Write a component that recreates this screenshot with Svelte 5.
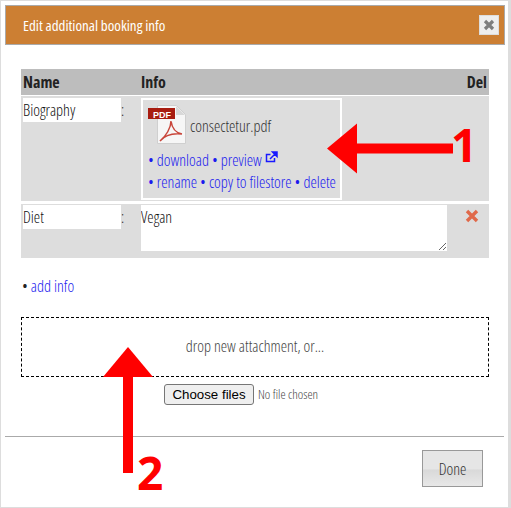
<script>
  let rows = [{ name: 'Diet', value: 'Vegan' }];
</script>

<div class="dialog">
  <header class="title-bar">
    <span>Edit additional booking info</span>
    <button class="close" aria-label="close">
      <svg width="12" height="12" viewBox="0 0 12 12"><path d="M2 2l8 8M10 2l-8 8" stroke="#7d7d7d" stroke-width="3.2" /></svg>
    </button>
  </header>

  <div class="content">
    <div class="thead">
      <span>Name</span>
      <span>Info</span>
      <span class="del">Del</span>
    </div>

    <div class="row first">
      <div class="name">Biography</div>
      <span class="colon">:</span>
      <div class="file-box">
        <div class="file-head">
          <svg class="pdf" width="38" height="40" viewBox="0 0 38 40">
            <path d="M9.5 .5h19l9 9v29h-28z" fill="#f6f6f6" stroke="#cfcfcf" />
            <path d="M28 1v9h9z" fill="#d8d8d8" />
            <rect x="0" y="3" width="27" height="11" fill="#a81c10" />
            <text x="5" y="12.5" class="pdf-label">PDF</text>
            <path d="M23 16c0 7-5 15-11 20 5-6 13-8 22-7-6-1-10-6-11-13z" fill="none" stroke="#c8453a" stroke-width="1.5" />
          </svg>
          <span class="filename">consectetur.pdf</span>
        </div>
        <div class="links">• <a href="#a">download</a> • <a href="#a">preview</a>
          <svg class="ext" width="13" height="12" viewBox="0 0 13 12"><path d="M9.5 7v3.5h-8v-7h4" fill="none" stroke="#1a1aff" stroke-width="1.5" /><path d="M5 8l5-5M7.5 1H12v4.5z" stroke="#1a1aff" stroke-width="1.5" fill="#1a1aff" /></svg>
        </div>
        <div class="links">• <a href="#a">rename</a> • <a href="#a">copy to filestore</a> • <a href="#a">delete</a></div>
      </div>
    </div>

    {#each rows as row}
      <div class="row second">
        <div class="name">{row.name}</div>
        <span class="colon">:</span>
        <textarea value={row.value}></textarea>
        <svg class="remove" width="14" height="14" viewBox="0 0 14 14"><path d="M2 2l10 10M12 2L2 12" stroke="#e0694a" stroke-width="3.4" /></svg>
      </div>
    {/each}

    <p class="add">• <a href="#a">add info</a></p>

    <div class="drop">drop new attachment, or...</div>

    <div class="chooser">
      <button class="choose">Choose files</button>
      <span>No file chosen</span>
    </div>
  </div>

  <footer>
    <button class="done">Done</button>
  </footer>

  <!-- annotations drawn on top of the screenshot -->
  <svg class="arrow" width="511" height="508" viewBox="0 0 511 508">
    <path d="M327 148.500l30-25v50z" fill="#f00" />
    <path d="M355 143.500h98v10h-98z" fill="#f00" />
    <path d="M128 347l-25 30h50z" fill="#f00" />
    <path d="M123 375h10v98h-10z" fill="#f00" />
  </svg>
  <span class="num one">1</span>
  <span class="num two">2</span>
</div>

<style>
  :global(body) {
    margin: 0;
    background: #fff;
  }

  .dialog {
    position: relative;
    width: 511px;
    height: 508px;
    box-sizing: border-box;
    overflow: hidden;
    background: #fff;
    border-style: solid;
    border-color: #ddd;
    border-width: 1px 3px 1px 1px;
    padding: 4px 0 0 4px;
    font-family: "Open Sans", sans-serif;
    font-stretch: condensed;
    font-size: 16px;
    font-weight: 300;
    color: #222;
  }

  a {
    color: #1a1aee;
    text-decoration: none;
  }

  .title-bar {
    width: 500px;
    height: 40px;
    box-sizing: border-box;
    display: flex;
    align-items: center;
    justify-content: space-between;
    padding: 0 5px 0 17px;
    background: #cc7f33;
    border: 1px solid #aaa;
    color: #fff;
    font-size: 15px;
    font-weight: 400;
  }

  .close {
    width: 20px;
    height: 20px;
    padding: 0;
    display: flex;
    align-items: center;
    justify-content: center;
    background: #eee;
    border: 1px solid #ddd;
  }

  .content {
    width: 468px;
    margin-left: 16px;
    padding-top: 24px;
  }

  .thead {
    display: grid;
    grid-template-columns: 118px 1fr auto;
    align-items: center;
    height: 26px;
    padding: 0 2px;
    background: #bdbdbd;
    font-size: 16px;
    font-weight: bold;
    color: #222;
  }

  .row {
    display: grid;
    grid-template-columns: 98px 20px auto 1fr;
    align-items: start;
    background: #ddd;
    padding: 2px;
  }

  .first {
    margin-top: 1px;
    height: 105px;
    box-sizing: border-box;
  }

  .second {
    margin-top: 3px;
    height: 54px;
    box-sizing: border-box;
    padding-top: 1px;
    grid-template-columns: 98px 20px 306px 1fr;
  }

  .name {
    height: 24px;
    line-height: 24px;
    background: #fff;
    color: #111;
  }

  .colon {
    line-height: 24px;
  }

  .file-box {
    width: 192px;
    height: 93px;
    border: 2px solid #fff;
    padding: 5px 0 0 5px;
  }

  .file-head {
    display: flex;
    align-items: center;
    gap: 4px;
    height: 40px;
    margin-bottom: 4px;
  }

  .pdf {
    flex: none;
  }

  .pdf-label {
    font-family: "Liberation Sans", sans-serif;
    font-stretch: normal;
    font-size: 9px;
    font-weight: bold;
    fill: #fff;
  }

  .filename {
    color: #333;
    margin-top: 2px;
  }

  .links {
    line-height: 22px;
    color: #1a1aee;
    white-space: nowrap;
  }

  .ext {
    vertical-align: 3px;
  }

  textarea {
    width: 306px;
    height: 46px;
    box-sizing: border-box;
    border: 0;
    border-radius: 0;
    margin: 0;
    padding: 1px 0;
    font: inherit;
    line-height: 22px;
    color: #111;
    background: #fff;
  }

  .remove {
    justify-self: end;
    margin: 4px 8px 0 0;
  }

  .add {
    margin: 18px 0 0 1px;
    line-height: 20px;
  }

  .drop {
    margin-top: 21px;
    height: 60px;
    box-sizing: border-box;
    display: flex;
    align-items: center;
    justify-content: center;
    padding-bottom: 2px;
    border: 1px dashed #000;
    color: #444;
  }

  .chooser {
    display: flex;
    align-items: center;
    justify-content: flex-start;
    gap: 4px;
    margin-top: 7px;
    padding-left: 143px;
    font-size: 13px;
    line-height: 19px;
    color: #444;
  }

  .choose {
    width: 90px;
    height: 21px;
    padding: 0;
    font-family: "Liberation Sans", sans-serif;
    font-stretch: normal;
    font-weight: 400;
    font-size: 13.300px;
    color: #000;
    background: #efefef;
    border: 1px solid #767676;
    border-radius: 3px;
  }

  footer {
    position: absolute;
    left: 4px;
    top: 435px;
    width: 499px;
    border-top: 1px solid #aaa;
    display: flex;
    justify-content: flex-end;
    padding: 13px 21px 0 0;
    box-sizing: border-box;
  }

  .done {
    width: 61px;
    height: 37px;
    padding: 0;
    font: inherit;
    color: #333;
    border: 1px solid #999;
    background: linear-gradient(#e6e6e6 50%, #d9d9d9 55%, #e8e8e8);
  }

  .arrow {
    position: absolute;
    left: -1px;
    top: -1px;
    pointer-events: none;
  }

  .num {
    position: absolute;
    font-family: "Open Sans", sans-serif;
    font-stretch: normal;
    font-weight: bold;
    font-size: 46px;
    line-height: 1;
    color: #f00;
  }

  .one {
    left: 450px;
    top: 120px;
  }

  .two {
    left: 136px;
    top: 448px;
  }
</style>
